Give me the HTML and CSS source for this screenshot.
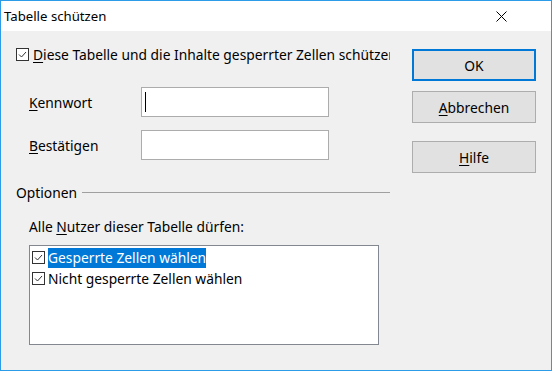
FILE: index.html
```
<!DOCTYPE html>
<html lang="de">
<head>
    <meta charset="UTF-8">
    <title>Tabelle schützen</title>
    <link rel="stylesheet" href="styles.css">
</head>
<body>
    <div class="dialog">
        <div class="titlebar">
            <span class="title">Tabelle schützen</span>
            <svg class="close" width="11" height="11" viewBox="0 0 11 11">
                <path d="M0.5 0.5 L10.5 10.5 M10.5 0.5 L0.5 10.5" stroke="#000" stroke-width="1" fill="none"/>
            </svg>
        </div>

        <div class="content">
            <div class="main">
                <div class="check-row">
                    <svg class="box" width="13" height="13" viewBox="0 0 13 13">
                        <rect x="0.5" y="0.5" width="12" height="12" fill="#fff" stroke="#333"/>
                        <path d="M3 6.5 L5.5 9 L10 4" stroke="#333" stroke-width="1" fill="none"/>
                    </svg>
                    <span><u>D</u>iese Tabelle und die Inhalte gesperrter Zellen schützen</span>
                </div>

                <div class="field">
                    <label><u>K</u>ennwort</label>
                    <div class="input"><span class="caret"></span></div>
                </div>
                <div class="field second">
                    <label><u>B</u>estätigen</label>
                    <div class="input"></div>
                </div>

                <div class="group">
                    <span>Optionen</span>
                    <div class="rule"></div>
                </div>

                <p class="hint">Alle <u>N</u>utzer dieser Tabelle dürfen:</p>

                <div class="listbox">
                    <div class="item">
                        <svg class="box" width="13" height="13" viewBox="0 0 13 13">
                            <rect x="0.5" y="0.5" width="12" height="12" fill="#fff" stroke="#333"/>
                            <path d="M3 6.5 L5.5 9 L10 4" stroke="#333" stroke-width="1" fill="none"/>
                        </svg>
                        <span class="selected">Gesperrte Zellen wählen</span>
                    </div>
                    <div class="item">
                        <svg class="box" width="13" height="13" viewBox="0 0 13 13">
                            <rect x="0.5" y="0.5" width="12" height="12" fill="#fff" stroke="#333"/>
                            <path d="M3 6.5 L5.5 9 L10 4" stroke="#333" stroke-width="1" fill="none"/>
                        </svg>
                        <span>Nicht gesperrte Zellen wählen</span>
                    </div>
                </div>
            </div>

            <div class="buttons">
                <button class="btn default">OK</button>
                <button class="btn"><u>A</u>bbrechen</button>
                <button class="btn help"><u>H</u>ilfe</button>
            </div>
        </div>
    </div>
</body>
</html>
```

FILE: styles.css
```
* {
    margin: 0;
    padding: 0;
    box-sizing: border-box;
}

body {
    font-family: "Noto Sans", "Open Sans", sans-serif;
    font-size: 13.8px;
    color: #000;
    background: #f0f0f0;
}

u {
    text-decoration: underline;
    text-underline-offset: 2px;
}

.dialog {
    width: 552px;
    height: 371px;
    border: 1px solid #2c9ce8;
    background: #f0f0f0;
    display: flex;
    flex-direction: column;
}

.titlebar {
    height: 30px;
    background: #fff;
    display: flex;
    align-items: center;
    justify-content: space-between;
    padding: 0 44px 0 3px;
    flex-shrink: 0;
}

.title {
    font-size: 13.2px;
}

.close {
    display: block;
}

.content {
    flex: 1;
    display: flex;
}

.main {
    width: 389px;
    overflow: hidden;
    white-space: nowrap;
    padding-left: 15px;
}

.check-row {
    margin-top: 14px;
    height: 18px;
    display: flex;
    align-items: center;
    gap: 4px;
}

.box {
    display: block;
    flex-shrink: 0;
}

.field {
    display: flex;
    align-items: center;
    margin-top: 24px;
    padding-left: 13px;
}

.field.second {
    margin-top: 13px;
}

.field label {
    width: 112px;
}

.input {
    width: 188px;
    height: 30px;
    background: #fff;
    border: 1px solid #acacac;
    padding: 4px 3px;
}

.caret {
    display: block;
    width: 1px;
    height: 20px;
    background: #000;
}

.group {
    display: flex;
    align-items: center;
    gap: 5px;
    margin-top: 24px;
    height: 16px;
}

.rule {
    flex: 1;
    height: 1px;
    background: #a0a0a0;
    margin-top: 1px;
}

.hint {
    margin-top: 19px;
    padding-left: 13px;
    line-height: 16px;
}

.listbox {
    margin: 10px 0 0 13px;
    width: 350px;
    height: 100px;
    background: #fff;
    border: 1px solid #828790;
    padding: 1px 2px;
}

.item {
    display: flex;
    align-items: center;
    height: 21px;
    gap: 3px;
}

.selected {
    background: #0078d7;
    color: #fff;
    line-height: 20px;
}

.buttons {
    display: flex;
    flex-direction: column;
    margin-left: 22px;
    padding-top: 18px;
}

.btn {
    width: 124px;
    height: 32px;
    background: #e1e1e1;
    border: 1px solid #adadad;
    font-family: inherit;
    font-size: 13.8px;
    color: #000;
    margin-bottom: 10px;
}

.btn.default {
    border: 2px solid #0078d7;
}

.btn.help {
    margin-top: 8px;
}
```
